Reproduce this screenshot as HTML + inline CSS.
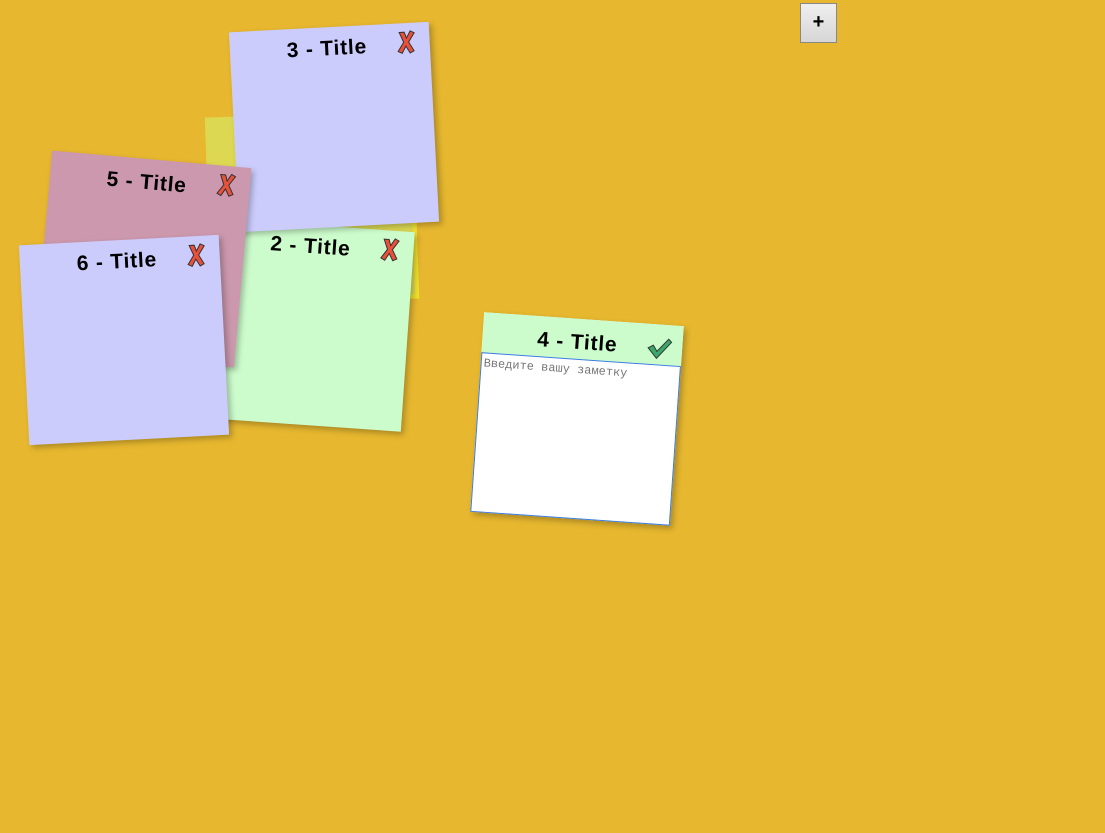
<!DOCTYPE html>
<html><head><meta charset="utf-8"><style>
body{margin:0;width:1105px;height:833px;background:#e6b72f;position:relative;overflow:hidden;font-family:"Liberation Sans",sans-serif}
.n{position:absolute;width:200px;height:200px;box-shadow:3px 3px 6px rgba(0,0,0,.25)}
.t{position:absolute;left:0;right:6px;top:10px;text-align:center;font-weight:bold;font-size:21px;color:#000;letter-spacing:.8px}
.x{position:absolute;right:12px;top:6px;width:22px;height:26px}
.btn{position:absolute;left:800px;top:3px;border:1px solid #888;background:linear-gradient(#efefef,#d6d6d6);font-weight:bold;font-size:20px;text-align:center;line-height:36px;box-sizing:border-box;width:37px;height:40px}
</style></head><body>
<div class="btn">+</div>
<div class="n" style="left:208px;top:114px;width:204px;height:184px;background:#dcd852;transform:rotate(-2deg);box-shadow:none;border-right:4px solid #efe02a;border-bottom:4px solid #efe02a"></div>
<div class="n" style="left:208px;top:225px;background:#ccfccc;transform:rotate(4deg)"><div class="t">2 - Title</div><svg class="x" viewBox="0 0 22 26"><path d="M4 3 L9 3 L11 9 L15 2 L19 4 L13 13 L18 22 L14 24 L10 17 L6 24 L2 22 L8 13 Z" fill="#e8503a" stroke="#333" stroke-width="1"/></svg></div>
<div class="n" style="left:234px;top:27px;background:#ccccfc;transform:rotate(-3deg)"><div class="t">3 - Title</div><svg class="x" viewBox="0 0 22 26"><path d="M4 3 L9 3 L11 9 L15 2 L19 4 L13 13 L18 22 L14 24 L10 17 L6 24 L2 22 L8 13 Z" fill="#e8503a" stroke="#333" stroke-width="1"/></svg></div>
<div class="n" style="left:43px;top:159px;background:#cc98ad;transform:rotate(5deg)"><div class="t" style="top:12px">5 - Title</div><svg class="x" viewBox="0 0 22 26"><path d="M4 3 L9 3 L11 9 L15 2 L19 4 L13 13 L18 22 L14 24 L10 17 L6 24 L2 22 L8 13 Z" fill="#e8503a" stroke="#333" stroke-width="1"/></svg></div>
<div class="n" style="left:24px;top:240px;background:#ccccfc;transform:rotate(-3deg)"><div class="t">6 - Title</div><svg class="x" viewBox="0 0 22 26"><path d="M4 3 L9 3 L11 9 L15 2 L19 4 L13 13 L18 22 L14 24 L10 17 L6 24 L2 22 L8 13 Z" fill="#e8503a" stroke="#333" stroke-width="1"/></svg></div>
<div class="n" style="left:477px;top:319px;background:#fff;transform:rotate(4deg)">
<div style="height:40px;background:#ccfccc;position:relative"><div class="t" style="top:12px;right:10px">4 - Title</div>
<svg style="position:absolute;right:10px;top:12px" width="26" height="24" viewBox="0 0 26 24"><path d="M2 12 L7 9 L11 15 L22 2 L25 5 L11 22 Z" fill="#3aa86a" stroke="#333" stroke-width="1"/></svg></div>
<div style="position:absolute;left:0;top:40px;border:1px solid #3a7de0;font-family:'Liberation Mono','DejaVu Sans Mono',monospace;font-size:12px;color:#777;padding:3px 2px;box-sizing:border-box;width:200px;height:160px">Введите вашу заметку</div>
</div>
</body></html>
